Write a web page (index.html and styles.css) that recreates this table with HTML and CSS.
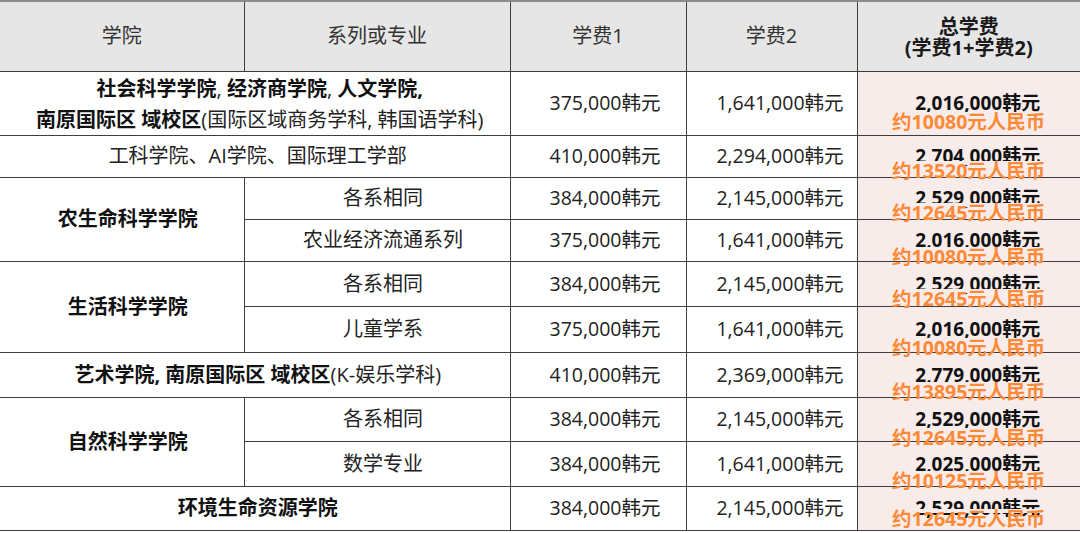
FILE: index.html
```html
<!DOCTYPE html>
<html lang="zh">
<head>
<meta charset="utf-8">
<title>学费</title>
<link rel="stylesheet" href="styles.css">
</head>
<body>
<table class="fees">
  <colgroup>
    <col class="c-college"><col class="c-major"><col class="c-fee1"><col class="c-fee2"><col class="c-total">
  </colgroup>
  <thead>
    <tr class="h-head">
      <th>学院</th>
      <th>系列或专业</th>
      <th>学费1</th>
      <th>学费2</th>
      <th class="th-total">总学费<br>(学费1+学费2)</th>
    </tr>
  </thead>
  <tbody>
    <tr class="h-r1">
      <td colspan="2" class="wide multi"><b>社会科学学院</b>, <b class="semi">经济商学院</b>, <b>人文学院,</b><br><b>南原国际区 域校区</b>(国际区域商务学科, 韩国语学科)</td>
      <td class="fee1">375,000韩元</td>
      <td class="fee2">1,641,000韩元</td>
      <td class="total"><span class="krw">2,016,000韩元<span class="rmb rmb-low">约10080元人民币</span></span></td>
    </tr>
    <tr class="h-r2">
      <td colspan="2" class="wide">工科学院、AI学院、国际理工学部</td>
      <td class="fee1">410,000韩元</td>
      <td class="fee2">2,294,000韩元</td>
      <td class="total"><span class="krw">2,704,000韩元<span class="rmb rmb-up">约13520元人民币</span></span></td>
    </tr>
    <tr class="h-r3">
      <td rowspan="2" class="college">农生命科学学院</td>
      <td class="major">各系相同</td>
      <td class="fee1">384,000韩元</td>
      <td class="fee2">2,145,000韩元</td>
      <td class="total"><span class="krw">2,529,000韩元<span class="rmb rmb-up">约12645元人民币</span></span></td>
    </tr>
    <tr class="h-r4">
      <td class="major">农业经济流通系列</td>
      <td class="fee1">375,000韩元</td>
      <td class="fee2">1,641,000韩元</td>
      <td class="total"><span class="krw">2,016,000韩元<span class="rmb">约10080元人民币</span></span></td>
    </tr>
    <tr class="h-r5">
      <td rowspan="2" class="college">生活科学学院</td>
      <td class="major">各系相同</td>
      <td class="fee1">384,000韩元</td>
      <td class="fee2">2,145,000韩元</td>
      <td class="total"><span class="krw">2,529,000韩元<span class="rmb rmb-up">约12645元人民币</span></span></td>
    </tr>
    <tr class="h-r6">
      <td class="major">儿童学系</td>
      <td class="fee1">375,000韩元</td>
      <td class="fee2">1,641,000韩元</td>
      <td class="total"><span class="krw">2,016,000韩元<span class="rmb rmb-low">约10080元人民币</span></span></td>
    </tr>
    <tr class="h-r7">
      <td colspan="2" class="wide"><b>艺术学院, 南原国际区 域校区</b>(K-娱乐学科)</td>
      <td class="fee1">410,000韩元</td>
      <td class="fee2">2,369,000韩元</td>
      <td class="total"><span class="krw">2,779,000韩元<span class="rmb">约13895元人民币</span></span></td>
    </tr>
    <tr class="h-r8">
      <td rowspan="2" class="college">自然科学学院</td>
      <td class="major">各系相同</td>
      <td class="fee1">384,000韩元</td>
      <td class="fee2">2,145,000韩元</td>
      <td class="total"><span class="krw">2,529,000韩元<span class="rmb rmb-low">约12645元人民币</span></span></td>
    </tr>
    <tr class="h-r9">
      <td class="major">数学专业</td>
      <td class="fee1">384,000韩元</td>
      <td class="fee2">1,641,000韩元</td>
      <td class="total"><span class="krw">2,025,000韩元<span class="rmb">约10125元人民币</span></span></td>
    </tr>
    <tr class="h-r10">
      <td colspan="2" class="wide"><b>环境生命资源学院</b></td>
      <td class="fee1">384,000韩元</td>
      <td class="fee2">2,145,000韩元</td>
      <td class="total"><span class="krw">2,529,000韩元<span class="rmb rmb-high">约12645元人民币</span></span></td>
    </tr>
  </tbody>
</table>
</body>
</html>
```

FILE: styles.css
```css
html, body {
  margin: 0;
  padding: 0;
  background: #ffffff;
}

body {
  font-family: "Open Sans", "Noto Sans CJK SC", sans-serif;
  color: #222222;
}

.fees {
  width: 1080px;
  border-collapse: collapse;
  table-layout: fixed;
}

.c-college { width: 244px; }
.c-major { width: 266px; }
.c-fee1 { width: 176px; }
.c-fee2 { width: 171px; }
.c-total { width: 223px; }

.fees th,
.fees td {
  border: 1px solid #3e3e3e;
  padding: 0;
  text-align: center;
  vertical-align: middle;
  font-size: 20px;
  line-height: 24px;
  white-space: nowrap;
}

.fees th:first-child,
.fees td:first-child {
  border-left: none;
}

.fees th:last-child,
.fees td:last-child {
  border-right: none;
}

.fees th {
  background: #e6e6e6;
  font-weight: normal;
  color: #333333;
  border-top: 2px solid #8c8c8c;
}

.fees th.th-total {
  font-weight: bold;
  color: #1a1a1a;
  line-height: 21px;
  padding-top: 2px;
}

.fees td.college,
.fees td.major {
  padding-left: 12px;
}

.fees td.college {
  font-weight: bold;
  color: #111111;
}

.fees td.wide {
  padding-left: 6px;
}

.fees td.multi {
  line-height: 31px;
  padding-left: 10px;
  padding-top: 1px;
}

.semi {
  font-weight: 600;
}

b {
  color: #111111;
}

.fees td.fee1 {
  padding-left: 14px;
  font-size: 19.5px;
}

.fees td.fee2 {
  padding-left: 17px;
  font-size: 19.5px;
}

.fees td.total {
  background: #f8eceb;
  padding-left: 18px;
}

.krw {
  position: relative;
  display: inline-block;
  font-size: 19px;
  line-height: 22px;
  font-weight: bold;
  color: #111111;
}

.rmb {
  position: absolute;
  left: calc(50% - 9px);
  top: 18px;
  transform: translateX(-50%);
  font-size: 19.5px;
  line-height: 19px;
  font-weight: bold;
  color: #fd8a36;
  white-space: nowrap;
  background: linear-gradient(to bottom, #f8eceb 0, #f8eceb 22%, transparent 22%);
}

.rmb-up { top: 16px; }
.rmb-low { top: 20px; }
.rmb-high { top: 12px; }

.h-head { height: 70px; }
.h-r1 { height: 64px; }
.h-r2 { height: 42px; }
.h-r3 { height: 42px; }
.h-r4 { height: 42px; }
.h-r5 { height: 45px; }
.h-r6 { height: 46px; }
.h-r7 { height: 45px; }
.h-r8 { height: 44px; }
.h-r9 { height: 45px; }
.h-r10 { height: 44px; }
```
